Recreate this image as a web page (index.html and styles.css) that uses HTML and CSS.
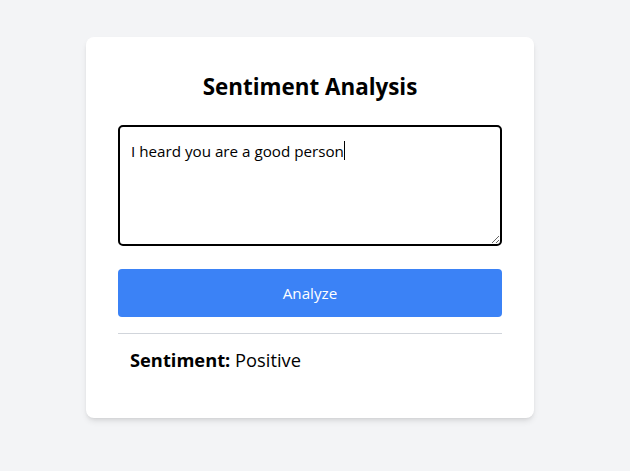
FILE: index.html
```html
<!DOCTYPE html>
<html lang="en">
<head>
<meta charset="utf-8">
<title>Sentiment Analysis</title>
<link rel="stylesheet" href="styles.css">
</head>
<body>
<main class="page">
  <section class="card">
    <h1 class="title">Sentiment Analysis</h1>
    <div class="field">
      <textarea class="input">I heard you are a good person</textarea>
      <span class="caret"></span>
    </div>
    <button class="btn" type="button">Analyze</button>
    <div class="result">
      <p class="result-text"><strong>Sentiment:</strong> Positive</p>
    </div>
  </section>
</main>
</body>
</html>
```
FILE: styles.css
```css
* { box-sizing: border-box; }
html, body { margin: 0; padding: 0; }
body {
  background: #f3f4f6;
  font-family: "Open Sans", "Noto Sans", sans-serif;
  color: #000;
  width: 630px;
  height: 471px;
}
.page {
  display: flex;
  justify-content: center;
  padding: 37px 10px 0 0;
}
.card {
  width: 448px;
  background: #fff;
  border-radius: 8px;
  padding: 32px;
  box-shadow: 0 4px 6px -1px rgba(0,0,0,0.1), 0 2px 4px -2px rgba(0,0,0,0.1);
}
.title {
  margin: 0 0 22px;
  padding-top: 2px;
  font-size: 22.4px;
  line-height: 32px;
  font-weight: 700;
  text-align: center;
}
.field { position: relative; }
.input {
  display: block;
  width: 384px;
  height: 121px;
  border: 2px solid #000;
  border-radius: 5px;
  padding: 12px 11px;
  font-family: inherit;
  font-size: 15.2px;
  line-height: 24px;
  color: #000;
  resize: vertical;
  outline: none;
}
.caret {
  position: absolute;
  left: 226px;
  top: 16px;
  width: 1px;
  height: 19px;
  background: #000;
}
.btn {
  display: block;
  width: 100%;
  margin-top: 23px;
  height: 48px;
  border: 0;
  border-radius: 4px;
  background: #3b82f6;
  color: #fff;
  font-family: inherit;
  font-size: 15.2px;
}
.result {
  margin-top: 16px;
  border-top: 1px solid #d1d5db;
  padding: 12px;
}
.result-text {
  margin: 0;
  font-size: 18.3px;
  line-height: 28px;
}
.result-text strong { font-weight: 700; }
```
